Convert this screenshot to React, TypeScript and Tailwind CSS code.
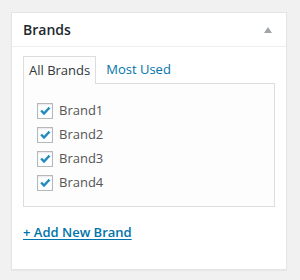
import React from 'react';

const brands = ['Brand1', 'Brand2', 'Brand3', 'Brand4'];

function CheckBox() {
  return (
    <span className="flex h-[16px] w-[16px] items-center justify-center border border-[#b4b9be] bg-white shadow-[inset_0_1px_2px_rgba(0,0,0,0.1)]">
      <svg width="14" height="14" viewBox="0 0 20 20">
        <path d="M3.2 10.4l2.4-2.3 3 3 6.6-7.1 2.4 2.3-9 9.6z" fill="#1e8cbe" />
      </svg>
    </span>
  );
}

export default function App() {
  return (
    <div className="h-[280px] w-[300px] bg-[#f1f1f1] pl-[11px] pt-[12px] font-['Open_Sans',sans-serif]">
      <div className="flex h-[258px] w-[276px] flex-col border border-[#e5e5e5] bg-white shadow-[0_1px_1px_rgba(0,0,0,0.04)]">
        {/* Header */}
        <div className="flex h-[34px] shrink-0 items-center justify-between border-b border-[#eeeeee] pl-[11px] pr-[14px]">
          <h2 className="text-[14px] font-semibold text-[#23282d]">Brands</h2>
          <svg width="8" height="6" viewBox="0 0 8 6">
            <path d="M4 0L8 6H0z" fill="#a0a5aa" />
          </svg>
        </div>

        <div className="px-[11px] pt-[9px]">
          {/* Tabs */}
          <div className="flex items-end text-[13px]">
            <div className="relative z-10 -mb-px flex h-[28px] items-center border border-b-0 border-[#dddddd] bg-[#fdfdfd] px-[5px] text-[#32373c]">
              All Brands
            </div>
            <span className="ml-[10px] flex h-[27px] items-center text-[#0073aa]">Most Used</span>
          </div>

          {/* Panel */}
          <div className="h-[124px] border border-[#dddddd] bg-[#fdfdfd] pl-[13px] pt-[15px]">
            <ul className="flex flex-col">
              {brands.map((b) => (
                <li key={b} className="flex h-[24px] items-center gap-[6px] text-[13px] text-[#555555]">
                  <CheckBox />
                  <span>{b}</span>
                </li>
              ))}
            </ul>
          </div>

          <div className="mt-[15px] text-[13px] font-semibold leading-[20px] text-[#0073aa] underline underline-offset-2">
            + Add New Brand
          </div>
        </div>
      </div>
    </div>
  );
}
